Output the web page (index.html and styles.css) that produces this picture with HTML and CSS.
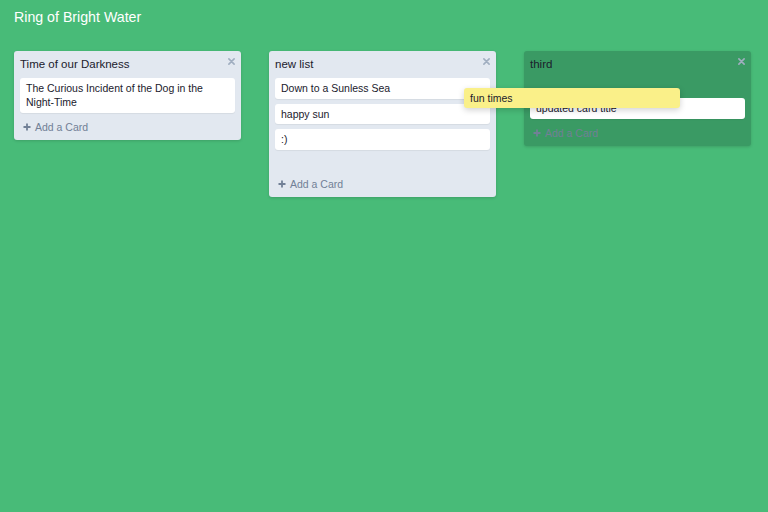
FILE: index.html
```html
<!DOCTYPE html>
<html>
<head>
<meta charset="utf-8">
<link rel="stylesheet" href="styles.css">
</head>
<body>
<h1 class="board-title">Ring of Bright Water</h1>
<main class="board">
  <section class="list">
    <div class="list-header">
      <h2 class="list-title">Time of our Darkness</h2>
      <svg class="close" viewBox="0 0 8 8" width="7" height="7"><path d="M1 1L7 7M7 1L1 7"/></svg>
    </div>
    <div class="cards">
      <div class="card">The Curious Incident of the Dog in the Night-Time</div>
    </div>
    <div class="add-card">
      <svg class="plus" viewBox="0 0 8 8" width="8" height="8"><path d="M4 0.5V7.5M0.5 4H7.5"/></svg>
      <span>Add a Card</span>
    </div>
  </section>
  <section class="list">
    <div class="list-header">
      <h2 class="list-title">new list</h2>
      <svg class="close" viewBox="0 0 8 8" width="7" height="7"><path d="M1 1L7 7M7 1L1 7"/></svg>
    </div>
    <div class="cards">
      <div class="card">Down to a Sunless Sea</div>
      <div class="card">happy sun</div>
      <div class="card">:)</div>
      <div class="placeholder"></div>
    </div>
    <div class="add-card">
      <svg class="plus" viewBox="0 0 8 8" width="8" height="8"><path d="M4 0.5V7.5M0.5 4H7.5"/></svg>
      <span>Add a Card</span>
    </div>
  </section>
  <section class="list list-over">
    <div class="list-header">
      <h2 class="list-title">third</h2>
      <svg class="close" viewBox="0 0 8 8" width="7" height="7"><path d="M1 1L7 7M7 1L1 7"/></svg>
    </div>
    <div class="cards">
      <div class="placeholder"></div>
      <div class="card">updated card title</div>
    </div>
    <div class="add-card">
      <svg class="plus" viewBox="0 0 8 8" width="8" height="8"><path d="M4 0.5V7.5M0.5 4H7.5"/></svg>
      <span>Add a Card</span>
    </div>
  </section>
</main>
<div class="card dragging">fun times</div>
</body>
</html>
```

FILE: styles.css
```css
* { box-sizing: border-box; }
html, body {
  margin: 0;
  height: 100%;
}
body {
  background: #48bb78;
  font-family: "Liberation Sans", Arial, Helvetica, sans-serif;
  color: #1a202c;
  overflow: hidden;
}
.board-title {
  margin: 0;
  padding: 9px 14px;
  font-size: 14.2px;
  line-height: 16px;
  font-weight: normal;
  color: #ffffff;
}
.board {
  display: flex;
  align-items: flex-start;
  gap: 28px;
  padding: 17px 14px 0;
}
.list {
  width: 227px;
  flex: none;
  background: #e2e8f0;
  border-radius: 3px;
  padding: 6px;
  box-shadow: 0 1px 3px rgba(0, 0, 0, 0.15);
}
.list-over {
  background: #3a9a64;
}
.list-header {
  display: flex;
  justify-content: space-between;
  align-items: flex-start;
  margin-bottom: 6px;
}
.list-title {
  margin: 0;
  font-size: 11.5px;
  line-height: 15px;
  font-weight: normal;
  color: #1a202c;
}
.close {
  margin-top: 0.5px;
  fill: none;
  stroke: #a0aec0;
  stroke-width: 1.8;
  stroke-linecap: round;
}
.cards {
  display: flex;
  flex-direction: column;
  gap: 5px;
}
.card {
  background: #ffffff;
  border-radius: 3px;
  padding: 3.3px 6px;
  font-size: 10.5px;
  line-height: 14px;
  color: #1a202c;
  box-shadow: 0 1px 1px rgba(0, 0, 0, 0.06);
}
.placeholder {
  height: 15px;
}
.add-card {
  display: flex;
  align-items: center;
  gap: 4px;
  margin-top: 7px;
  padding-left: 3px;
  height: 14px;
  font-size: 10.5px;
  line-height: 14px;
  color: #718096;
}
.plus {
  fill: none;
  stroke: #718096;
  stroke-width: 1.8;
}
.dragging {
  position: absolute;
  left: 464px;
  top: 88px;
  width: 216px;
  height: 20px;
  background: #faf089;
  box-shadow: 0 2px 6px rgba(0, 0, 0, 0.18);
}
```
